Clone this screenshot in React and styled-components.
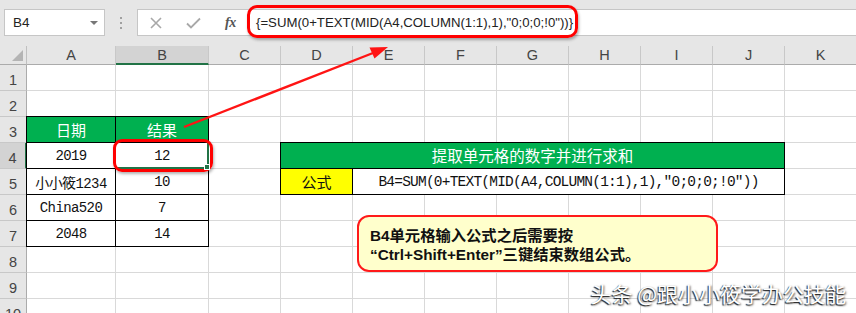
import React from "react";
import styled, { createGlobalStyle } from "styled-components";

// Page-wide reset
const GlobalStyle = createGlobalStyle`
  html, body {
    margin: 0;
    padding: 0;
    background: #fff;
  }
  body {
    width: 856px;
    height: 313px;
    overflow: hidden;
    font-family: "Liberation Sans", "Noto Sans CJK SC", sans-serif;
  }
`;

const Page = styled.div`
  position: relative;
  width: 856px;
  height: 313px;
  overflow: hidden;
  background: #fff;
`;

// Top toolbar: name box + formula bar
const Toolbar = styled.div`
  display: flex;
  align-items: flex-start;
  height: 46px;
  padding: 9px 0 0 4px;
  box-sizing: border-box;
  background: #e6e6e6;
`;

const NameBox = styled.div`
  display: flex;
  align-items: center;
  justify-content: space-between;
  width: 101px;
  height: 27px;
  padding: 0 6px 0 8px;
  box-sizing: border-box;
  background: #fff;
  border: 1px solid #c6c6c6;
  font-size: 13.5px;
  color: #222;
`;

const DropArrow = styled.span`
  width: 0;
  height: 0;
  border-left: 4px solid transparent;
  border-right: 4px solid transparent;
  border-top: 4px solid #777;
`;

const Grip = styled.div`
  display: flex;
  flex-direction: column;
  align-items: center;
  justify-content: center;
  gap: 3px;
  width: 32px;
  height: 27px;

  span {
    width: 2px;
    height: 2px;
    background: #a0a0a0;
  }
`;

const FormulaBar = styled.div`
  position: relative;
  display: flex;
  align-items: center;
  flex: 1;
  height: 27px;
  box-sizing: border-box;
  background: #fff;
  border: 1px solid #c6c6c6;
  border-right: none;
`;

const IconGroup = styled.div`
  display: flex;
  align-items: center;
  width: 110px;
  height: 100%;
  padding-left: 12px;
  box-sizing: border-box;
  gap: 24px;
`;

const FxLabel = styled.span`
  font-family: "Liberation Serif", serif;
  font-style: italic;
  font-weight: bold;
  font-size: 14px;
  color: #555;
  letter-spacing: -0.5px;
`;

const FormulaText = styled.div`
  padding-left: 8px;
  font-family: "Liberation Sans", sans-serif;
  font-size: 13.2px;
  color: #222;
  white-space: nowrap;
`;

const RedFrame = styled.div`
  position: absolute;
  left: ${(p) => p.$left}px;
  top: ${(p) => p.$top}px;
  width: ${(p) => p.$w}px;
  height: ${(p) => p.$h}px;
  box-sizing: border-box;
  border: 3px solid #f00;
  border-radius: ${(p) => p.$r}px;
  box-shadow: 1px 2px 3px rgba(0, 0, 0, 0.3);
  pointer-events: none;
`;

// Spreadsheet grid
const Sheet = styled.div`
  display: grid;
  grid-template-columns: 27px 89px 93px repeat(9, 72px);
  grid-template-rows: 19px repeat(10, 26px);
`;

const Corner = styled.div`
  grid-column: 1;
  grid-row: 1;
  position: relative;
  background: #e6e6e6;
  border-right: 1px solid #c0c0c0;
  border-bottom: 1px solid #ababab;

  &::after {
    content: "";
    position: absolute;
    right: 3px;
    bottom: 3px;
    width: 0;
    height: 0;
    border-left: 11px solid transparent;
    border-bottom: 11px solid #b4b4b4;
  }
`;

const ColHeader = styled.div`
  grid-column: ${(p) => p.$col};
  grid-row: 1;
  display: flex;
  align-items: center;
  justify-content: center;
  box-sizing: border-box;
  background: ${(p) => (p.$active ? "#d3d3d3" : "#e6e6e6")};
  border-right: 1px solid #c8c8c8;
  border-bottom: ${(p) => (p.$active ? "2px solid #217346" : "1px solid #ababab")};
  font-size: 14.5px;
  color: #444;
`;

const RowHeader = styled.div`
  grid-column: 1;
  grid-row: ${(p) => p.$row};
  display: flex;
  align-items: flex-end;
  justify-content: center;
  padding-bottom: 2px;
  box-sizing: border-box;
  background: ${(p) => (p.$active ? "#d3d3d3" : "#e6e6e6")};
  border-bottom: 1px solid #c8c8c8;
  border-right: ${(p) => (p.$active ? "2px solid #217346" : "1px solid #ababab")};
  font-size: 14.5px;
  color: #444;
`;

const Cell = styled.div`
  grid-column: ${(p) => p.$col};
  grid-row: ${(p) => p.$row};
  border-right: 1px solid #d9d9d9;
  border-bottom: 1px solid #d9d9d9;
`;

// Bordered tables laid on the grid
const Table = styled.div`
  grid-column: ${(p) => p.$cols};
  grid-row: ${(p) => p.$rows};
  z-index: 1;
  display: grid;
  grid-template-columns: ${(p) => p.$template};
  grid-auto-rows: 26px;
  margin: -1px 0 0 -1px;
  border-top: 1px solid #000;
  border-left: 1px solid #000;
`;

const TCell = styled.div`
  grid-column: ${(p) => p.$span || "auto"};
  display: flex;
  align-items: center;
  justify-content: center;
  box-sizing: border-box;
  border-right: 1px solid #000;
  border-bottom: 1px solid #000;
  background: ${(p) => p.$bg || "#fff"};
  color: ${(p) => p.$color || "#111"};
  font-family: "Liberation Mono", "Noto Sans CJK SC", monospace;
  font-size: ${(p) => p.$size || 14}px;
  letter-spacing: ${(p) => p.$ls || 0}px;
  white-space: nowrap;
`;

const Selection = styled.div`
  grid-column: 3;
  grid-row: 5;
  z-index: 2;
  position: relative;
  box-sizing: border-box;
  border-right: 2px solid #217346;
  border-bottom: 2px solid #217346;

  &::after {
    content: "";
    position: absolute;
    right: -3px;
    bottom: -3px;
    width: 4px;
    height: 4px;
    background: #217346;
    border: 1px solid #fff;
  }
`;

// Annotations over the sheet
const Overlay = styled.svg`
  position: absolute;
  left: 0;
  top: 0;
  z-index: 5;
  pointer-events: none;
`;

const Callout = styled.div`
  position: absolute;
  left: 357px;
  top: 215px;
  z-index: 4;
  width: 361px;
  height: 57px;
  padding: 9px 0 0 11px;
  box-sizing: border-box;
  background: #ffffcc;
  border: 2px solid #ff1a1a;
  border-radius: 12px;
  font-family: "Liberation Sans", "Noto Sans CJK SC", sans-serif;
  font-weight: bold;
  font-size: 15.3px;
  line-height: 19px;
  color: #111;
  white-space: nowrap;
`;

const Watermark = styled.div`
  position: absolute;
  right: 10px;
  top: 281px;
  z-index: 6;
  font-family: "Noto Sans CJK SC", sans-serif;
  font-size: 21px;
  line-height: 24px;
  color: #fff;
  text-shadow: -1px 1px 1px #222, 1px 1px 2px rgba(0, 0, 0, 0.6);
  white-space: nowrap;
`;

const LETTERS = ["A", "B", "C", "D", "E", "F", "G", "H", "I", "J", "K"];
const ROWS = [1, 2, 3, 4, 5, 6, 7, 8, 9, 10];

const DATA = [
  ["2019", "12"],
  ["小小筱1234", "10"],
  ["China520", "7"],
  ["2048", "14"],
];

export default function App() {
  return (
    <Page>
      <GlobalStyle />
      <Toolbar>
        <NameBox>
          B4
          <DropArrow />
        </NameBox>
        <Grip>
          <span />
          <span />
          <span />
        </Grip>
        <FormulaBar>
          <IconGroup>
            <svg width="12" height="12" viewBox="0 0 12 12">
              <path d="M1 1 L11 11 M11 1 L1 11" stroke="#a8a8a8" strokeWidth="1.6" />
            </svg>
            <svg width="15" height="12" viewBox="0 0 15 12">
              <path d="M1 6.5 L5 10.5 L14 1.5" stroke="#a8a8a8" strokeWidth="1.8" fill="none" />
            </svg>
            <FxLabel>fx</FxLabel>
          </IconGroup>
          <FormulaText>{'{=SUM(0+TEXT(MID(A4,COLUMN(1:1),1),"0;0;0;!0"))}'}</FormulaText>
          <RedFrame $left={109} $top={-5} $w={331} $h={33} $r={10} />
        </FormulaBar>
      </Toolbar>

      <Sheet>
        <Corner />
        {LETTERS.map((l, i) => (
          <ColHeader key={l} $col={i + 2} $active={l === "B"}>
            {l}
          </ColHeader>
        ))}
        {ROWS.map((r) => (
          <RowHeader key={r} $row={r + 1} $active={r === 4}>
            {r}
          </RowHeader>
        ))}
        {ROWS.map((r) =>
          LETTERS.map((l, i) => <Cell key={l + r} $col={i + 2} $row={r + 1} />)
        )}

        <Table $cols="2 / 4" $rows="4 / 9" $template="89px 93px">
          <TCell $bg="#00b050" $color="#fff" $size={15}>日期</TCell>
          <TCell $bg="#00b050" $color="#fff" $size={15}>结果</TCell>
          {DATA.map(([a, b]) => (
            <React.Fragment key={a}>
              <TCell $ls={-0.6}>{a}</TCell>
              <TCell $ls={-0.6}>{b}</TCell>
            </React.Fragment>
          ))}
        </Table>

        <Selection>
          <RedFrame $left={-3} $top={-4} $w={100} $h={33} $r={9} />
        </Selection>

        <Table $cols="5 / 12" $rows="5 / 7" $template="72px 1fr">
          <TCell $span="1 / 3" $bg="#00b050" $color="#fff" $size={15.5}>
            提取单元格的数字并进行求和
          </TCell>
          <TCell $bg="#ffff00" $size={15}>公式</TCell>
          <TCell $size={14.5} $ls={-0.78}>
            {'B4=SUM(0+TEXT(MID(A4,COLUMN(1:1),1),"0;0;0;!0"))'}
          </TCell>
        </Table>
      </Sheet>

      <Overlay width="856" height="313" viewBox="0 0 856 313">
        <line x1="184" y1="127" x2="373" y2="53" stroke="#ff1414" strokeWidth="2.4" />
        <polygon points="388,47 374.5,58.5 369.5,47.5" fill="#ff1414" />
      </Overlay>

      <Callout>
        <div>B4单元格输入公式之后需要按</div>
        <div>“Ctrl+Shift+Enter”三键结束数组公式。</div>
      </Callout>

      <Watermark>头条 @跟小小筱学办公技能</Watermark>
    </Page>
  );
}
